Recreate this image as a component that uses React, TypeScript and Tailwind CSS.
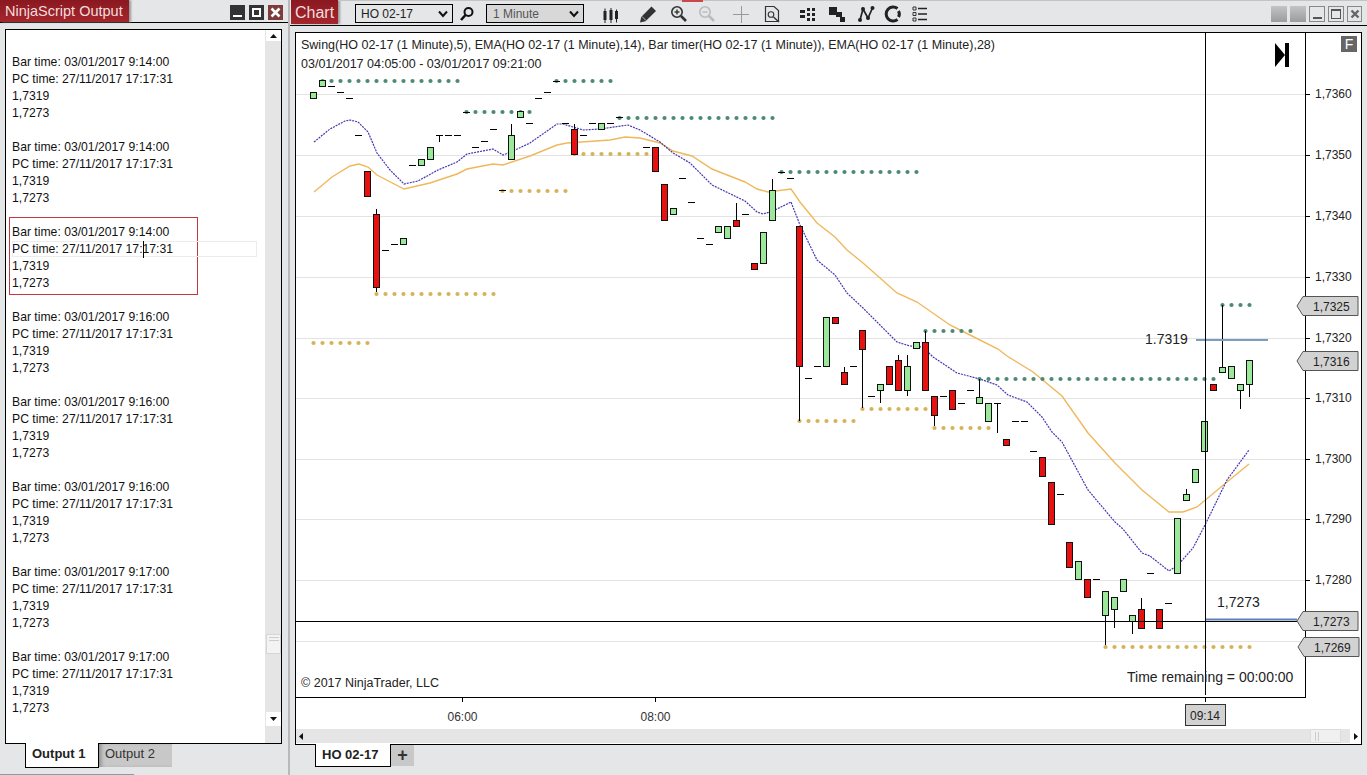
import type { ReactNode } from 'react';

const FONT = "font-['Liberation_Sans',Arial,sans-serif]";

// chart data in page pixels: [x, top, bottom, colour, wickTop, wickBottom]
type Candle = [number, number, number, 'r' | 'g', number?, number?];
const candles: Candle[] = [
  [313.5, 92, 98, 'g'], [322.5, 80, 86, 'g'], [367.5, 171, 196, 'r'], [376.5, 214, 287, 'r', 209, 292],
  [403.5, 238, 244, 'g'], [421.5, 159, 165, 'g'], [430.5, 147, 159, 'g'], [511.5, 135, 159, 'g', 124],
  [520.5, 111, 117, 'g'], [574.5, 129, 154, 'r', 124], [601.5, 123, 129, 'g'], [655.5, 147, 171, 'r'],
  [664.5, 184, 220, 'r'], [673.5, 208, 214, 'g'], [718.5, 226, 232, 'g'], [727.5, 226, 238, 'g'],
  [736.5, 220, 226, 'r', 203], [754.5, 263, 269, 'r'], [763.5, 232, 263, 'g'], [772.5, 190, 220, 'g', 179],
  [799.5, 226, 366, 'r', undefined, 421], [826.5, 317, 366, 'g'], [835.5, 317, 323, 'r'], [844.5, 372, 384, 'r', 367],
  [862.5, 330, 349, 'r', undefined, 408], [880.5, 384, 390, 'g', undefined, 403], [889.5, 366, 384, 'r'],
  [898.5, 360, 390, 'r', 355], [907.5, 366, 390, 'g', 355, 396], [916.5, 342, 348, 'g'], [925.5, 342, 390, 'r', 331],
  [934.5, 396, 415, 'r', undefined, 426], [952.5, 390, 409, 'r'], [979.5, 397, 403, 'g', 379], [988.5, 403, 421, 'g'],
  [1006.5, 439, 445, 'r'], [1042.5, 457, 476, 'r'], [1051.5, 482, 524, 'r'], [1069.5, 542, 567, 'r'],
  [1078.5, 561, 579, 'g'], [1087.5, 579, 597, 'r'], [1105.5, 591, 615, 'g', undefined, 645],
  [1114.5, 597, 609, 'g', undefined, 628], [1123.5, 579, 591, 'g'], [1132.5, 615, 621, 'g', undefined, 634],
  [1141.5, 609, 628, 'r', 598], [1159.5, 609, 628, 'r'], [1177.5, 518, 573, 'g'], [1186.5, 494, 500, 'g', 489],
  [1195.5, 469, 482, 'g'], [1204.5, 421, 451, 'g'], [1213.5, 384, 390, 'r'], [1222.5, 367, 372, 'g', 305],
  [1231.5, 366, 378, 'g'], [1240.5, 384, 390, 'g', undefined, 409], [1249.5, 360, 384, 'g', undefined, 397],
];

const dashes = [
  [331.5, 86], [340.5, 92], [349.5, 98], [358.5, 135], [385.5, 250], [394.5, 244], [412.5, 165], [439.5, 135],
  [448.5, 135], [457.5, 135], [466.5, 112], [475.5, 147], [484.5, 141], [493.5, 129], [502.5, 190], [529.5, 123],
  [538.5, 98], [547.5, 92], [556.5, 81], [565.5, 123], [583.5, 135], [592.5, 123], [610.5, 123], [619.5, 117],
  [646.5, 147], [682.5, 178], [691.5, 202], [700.5, 238], [709.5, 244], [745.5, 214], [781.5, 172], [790.5, 178],
  [808.5, 378], [817.5, 366], [853.5, 366], [871.5, 396], [943.5, 396], [961.5, 403], [970.5, 390], [1015.5, 421],
  [1024.5, 421], [1033.5, 451], [1060.5, 494], [1096.5, 579], [1150.5, 573], [1168.5, 603],
];

// [y, first x, last x], one dot every 9px
const greenDots = [[81, 322.5, 458.5], [81, 556.5, 610.5], [112, 466.5, 529.5], [118, 619.5, 772.5], [172, 781.5, 916.5], [331, 925.5, 970.5], [379, 979.5, 1213.5], [305, 1222.5, 1249.5]];
const goldDots = [[343, 313.5, 367.5], [294, 376.5, 493.5], [191, 502.5, 565.5], [154, 574.5, 646.5], [421, 799.5, 853.5], [409, 862.5, 925.5], [428, 934.5, 988.5], [647, 1105.5, 1249.5]];

const ema14 = '314,142 330,129 345,121 350,120 358,122 368,132 377,153 390,170 404,184 418,181 438,170 457,162 467,154 493,149 503,155 513,151 530,143 557,124 563,124 583,130 600,129 628,125 640,130 660,142 673,153 690,163 712,185 745,201 757,212 763,214 773,211 791,202 800,225 817,260 835,275 847,293 863,308 897,342 910,346 923,347 933,357 957,373 980,379 997,385 1008,395 1027,402 1042,417 1052,432 1062,442 1088,490 1115,522 1123,529 1142,553 1150,556 1169,571 1178,565 1193,548 1205,525 1227,480 1249,450';
const ema28 = '314,192 332,177 350,166 359,164 368,167 377,175 404,189 430,183 457,174 467,169 493,164 503,165 530,156 557,145 567,143 610,140 625,137 640,138 660,143 673,151 692,156 712,169 745,182 757,189 768,192 791,189 800,202 817,223 835,237 847,250 863,263 897,293 917,302 950,325 970,335 998,349 1007,356 1033,372 1062,396 1088,433 1115,463 1142,490 1169,512 1183,512 1197,507 1227,482 1249,464';

const grid = [
  [94, '1,7360'], [155, '1,7350'], [216, '1,7340'], [277, '1,7330'], [338, '1,7320'],
  [398, '1,7310'], [459, '1,7300'], [519, '1,7290'], [580, '1,7280'], [641, ''],
] as const;
const tags = [[306, '1,7325', 1297], [361, '1,7316', 1297], [621, '1,7273', 1297], [647, '1,7269', 1298]] as const;

const dotsFor = (row: number[]) => {
  const out: number[] = [];
  for (let x = row[1]; x <= row[2]; x += 9) out.push(x);
  return out;
};

const ChartDrawing = () => (
  <svg width="1065" height="696" viewBox="296 33 1065 696" className="block">
    {grid.map(([y]) => (
      <line key={y} x1="296" x2="1305" y1={y + 0.5} y2={y + 0.5} stroke="#e3e3e3" />
    ))}
    <polyline points={ema28} fill="none" stroke="#f0b85c" strokeWidth="1.4" />
    <polyline points={ema14} fill="none" stroke="#4338b0" strokeWidth="1.2" strokeDasharray="2 1" />
    {greenDots.map((row) => dotsFor(row).map((x) => <circle key={`${row[0]}-${x}`} cx={x} cy={row[0]} r="2.1" fill="#4d8a72" />))}
    {goldDots.map((row) => dotsFor(row).map((x) => <circle key={`${row[0]}-${x}`} cx={x} cy={row[0]} r="2.1" fill="#d6b25a" />))}
    {dashes.map(([x, y]) => (
      <line key={`${x}-${y}`} x1={x - 3.5} x2={x + 3.5} y1={y + 0.5} y2={y + 0.5} stroke="#000" />
    ))}
    {/* the small T candles */}
    <line x1="439.5" x2="439.5" y1="135" y2="142" stroke="#000" />
    <line x1="997.5" x2="997.5" y1="403" y2="433" stroke="#000" />
    <line x1="994" x2="1001" y1="403.5" y2="403.5" stroke="#000" />
    {candles.map(([x, top, bottom, c, wickTop, wickBottom]) => (
      <g key={x}>
        {wickTop !== undefined && <line x1={x} x2={x} y1={wickTop} y2={top} stroke="#000" />}
        {wickBottom !== undefined && <line x1={x} x2={x} y1={bottom} y2={wickBottom} stroke="#000" />}
        <rect x={x - 3} y={top + 0.5} width="6" height={bottom - top} fill={c === 'r' ? '#e61212' : '#9be89b'} stroke="#111" />
      </g>
    ))}
    {/* drawn lines and crosshair */}
    <line x1="1196" x2="1268" y1="340" y2="340" stroke="#7d9cc4" strokeWidth="2" />
    <line x1="1205" x2="1297" y1="619.5" y2="619.5" stroke="#5f82bd" strokeWidth="2" />
    <line x1="296" x2="1297" y1="621.5" y2="621.5" stroke="#000" />
    <line x1="1205.5" x2="1205.5" y1="33" y2="695" stroke="#000" />
    {/* frame and axes */}
    <line x1="1305.5" x2="1305.5" y1="33" y2="698" stroke="#000" />
    <line x1="296" x2="1305" y1="697.5" y2="697.5" stroke="#000" />
    {grid.map(([y, label]) => (
      <g key={label || y}>
        {label && <line x1="1305" x2="1310" y1={y + 0.5} y2={y + 0.5} stroke="#000" />}
        <text x="1315" y={y + 4} fontSize="12" fill="#222">{label}</text>
      </g>
    ))}
    {tags.map(([y, label, x]) => (
      <g key={label}>
        <polygon points={`${x},${y} ${x + 6},${y - 9.5} ${x + 61},${y - 9.5} ${x + 61},${y + 9.5} ${x + 6},${y + 9.5}`} fill="#d2d2d2" stroke="#555" />
        <text x={x + 16} y={y + 4.5} fontSize="12" fill="#222">{label}</text>
      </g>
    ))}
    {[462.5, 655.5, 1205.5].map((x) => (
      <line key={x} x1={x} x2={x} y1="697" y2="702" stroke="#000" />
    ))}
    <text x="447.5" y="721" fontSize="12" fill="#333">06:00</text>
    <text x="640.5" y="721" fontSize="12" fill="#333">08:00</text>
    <rect x="1185.5" y="704.5" width="40" height="21" fill="#d2d2d2" stroke="#333" />
    <text x="1190" y="720" fontSize="12" fill="#222">09:14</text>
    <text x="1145" y="344" fontSize="14" fill="#222">1.7319</text>
    <text x="1217" y="607" fontSize="14" fill="#222">1,7273</text>
    <text x="1127" y="682" fontSize="14" fill="#222">Time remaining = 00:00:00</text>
    <polygon points="1275,43 1285,55 1275,67" fill="#000" />
    <rect x="1285" y="43" width="4" height="24" fill="#000" />
  </svg>
);

const ToolIcon = ({ children, className = '' }: { children: ReactNode; className?: string }) => (
  <svg width="18" height="18" viewBox="0 0 18 18" className={`shrink-0 ${className}`}>{children}</svg>
);

const Zoom = ({ color, plus }: { color: string; plus?: boolean }) => (
  <ToolIcon>
    <circle cx="7" cy="7" r="5.2" fill="none" stroke={color} strokeWidth="1.6" />
    <line x1="11" y1="11" x2="16" y2="16" stroke={color} strokeWidth="2.6" />
    <line x1="4.5" y1="7" x2="9.5" y2="7" stroke={color} strokeWidth="1.4" />
    {plus && <line x1="7" y1="4.5" x2="7" y2="9.5" stroke={color} strokeWidth="1.4" />}
  </ToolIcon>
);

const Chevron = () => (
  <svg width="10" height="8" viewBox="0 0 10 8"><path d="M1 1.5 L5 6 L9 1.5" fill="none" stroke="#111" strokeWidth="2" /></svg>
);

const Toolbar = () => (
  <div className="flex items-center h-full pt-[2px]">
    <div className="ml-[17px] w-[98px] h-[19px] border border-black bg-[#e4e6e8] flex items-center pl-[5px] pr-[4px] text-[12px] text-[#222] justify-between">
      HO 02-17
      <Chevron />
    </div>
    <svg width="16" height="16" viewBox="0 0 16 16" className="ml-[6px]">
      <circle cx="9.5" cy="6" r="4" fill="none" stroke="#111" strokeWidth="2" />
      <line x1="6.5" y1="9" x2="2" y2="14" stroke="#111" strokeWidth="2.6" />
    </svg>
    <div className="ml-[11px] w-[98px] h-[19px] border border-black bg-[#d8d8d8] flex items-center pl-[6px] pr-[4px] text-[12px] text-[#555] justify-between">
      1 Minute
      <Chevron />
    </div>
    <div className="ml-[17px] flex items-center">
      <ToolIcon className="mr-[20px]">
        <path d="M4 3.5v15M10 3v15M15.5 4.5v13" stroke="#222" strokeWidth="1" />
        <rect x="2.5" y="6" width="3" height="9" fill="#222" /><rect x="8.5" y="5" width="3" height="10" fill="#222" /><rect x="14" y="6" width="3" height="8" fill="#222" />
      </ToolIcon>
      <ToolIcon className="mr-[13px]">
        <path d="M1 17.5 L2.2 12 L12.5 1.5 L17 6 L6.5 16.3 Z" fill="#333" />
        <line x1="3" y1="11.5" x2="7" y2="15.5" stroke="#ddd" strokeWidth="0.8" />
      </ToolIcon>
      <div className="mr-[10px]"><Zoom color="#333" plus /></div>
      <div className="mr-[16px]"><Zoom color="#bbb" /></div>
      <ToolIcon className="mr-[13px]">
        <path d="M1 9.5H17M9.5 1V18" stroke="#999" strokeWidth="1" fill="none" />
      </ToolIcon>
      <ToolIcon className="mr-[19px]">
        <path d="M2.5 1.5H11L15.5 5.5V16.5H2.5Z" fill="none" stroke="#333" strokeWidth="1.2" />
        <circle cx="8" cy="9.5" r="2.8" fill="none" stroke="#333" strokeWidth="1.1" />
        <line x1="10.5" y1="12" x2="16" y2="17" stroke="#333" strokeWidth="1.4" />
      </ToolIcon>
      <ToolIcon className="mr-[11px]">
        <path d="M0 5h5v3H0zM0 10h5v3H0zM7 3h3v3H7zM12 3h3v3h-3zM7 8h3v3H7zM12 8h3v3h-3zM7 13h3v3H7zM12 13h3v3h-3z" fill="#222" />
      </ToolIcon>
      <ToolIcon className="mr-[10px]">
        <path d="M0 2h8v8H0zM7 7h6v5H7zM11 12h5v5h-5z" fill="#222" />
      </ToolIcon>
      <ToolIcon className="mr-[9px]">
        <path d="M3 15 L6 4 L11 13 L15.5 3" fill="none" stroke="#222" strokeWidth="1.7" />
        <circle cx="3" cy="15" r="2" fill="#222" /><circle cx="6" cy="4" r="2" fill="#222" /><circle cx="11" cy="13" r="2" fill="#222" /><circle cx="15.5" cy="3" r="2" fill="#222" />
      </ToolIcon>
      <ToolIcon className="mr-[9px]">
        <path d="M13.5 3.5 A7 7 0 1 0 13.5 14.5" fill="none" stroke="#222" strokeWidth="3" />
        <path d="M14.5 6 A6 6 0 0 1 14.5 12" fill="none" stroke="#222" strokeWidth="3" />
      </ToolIcon>
      <ToolIcon>
        <path d="M2 2h3v3H2zM2 7.5h3v3H2zM2 13h3v3H2z" fill="none" stroke="#333" />
        <path d="M7 3.5h9M7 9h9M7 14.5h9" stroke="#222" strokeWidth="1.6" />
      </ToolIcon>
    </div>
  </div>
);

const WinBtn = ({ className, children }: { className: string; children?: ReactNode }) => (
  <div className={`flex items-center justify-center ${className}`}>{children}</div>
);

const outputBlocks = ['9:14:00', '9:14:00', '9:14:00', '9:16:00', '9:16:00', '9:16:00', '9:17:00', '9:17:00'];

const OutputPanel = () => (
  <aside className="w-[288px] shrink-0 flex flex-col">
    <div className="h-[23px] border-b border-black flex">
      <div className="w-[129px] h-[22px] pl-[5px] whitespace-nowrap bg-gradient-to-b from-[#8a1820] to-[#a5262d] text-[#f3dddd] text-[14.5px] leading-[22px] shadow-[2px_0_2px_#999]">NinjaScript Output</div>
      <div className="ml-[101px] mt-[5px] flex gap-[4px] h-[15px]">
        <WinBtn className="w-[15px] h-[15px] bg-[#333]"><div className="w-[9px] h-[2px] bg-white mt-[7px]" /></WinBtn>
        <WinBtn className="w-[15px] h-[15px] bg-[#333]"><div className="w-[9px] h-[9px] border-2 border-white" /></WinBtn>
        <WinBtn className="w-[15px] h-[15px] bg-[#7e3b3b]">
          <svg width="11" height="11" viewBox="0 0 11 11"><path d="M1.5 1.5L9.5 9.5M9.5 1.5L1.5 9.5" stroke="#fff" strokeWidth="2.6" /></svg>
        </WinBtn>
      </div>
    </div>
    <div className="ml-[5px] mt-[6px] w-[277px] h-[715px] border border-black bg-white flex relative">
      <div className="flex-1 pl-[6px] pt-[24px] text-[12.2px] leading-[17px] text-[#111]">
        {outputBlocks.map((time, i) => (
          <div key={i} className="h-[85px]">
            <div>Bar time: 03/01/2017 {time}</div>
            <div>PC time: 27/11/2017 17:17:31</div>
            <div>1,7319</div>
            <div>1,7273</div>
          </div>
        ))}
      </div>
      {/* selection marks over the text */}
      <div className="absolute left-[3px] top-[187px] w-[189px] h-[78px] border border-[#c0393f]" />
      <div className="absolute left-[6px] top-[211px] w-[245px] h-[16px] border border-[#ececec]" />
      <div className="absolute left-[137px] top-[211px] w-px h-[17px] bg-black" />
      <div className="w-[16px] bg-[#e5e5e5] flex flex-col items-end">
        <div className="w-[15px] h-[11px] bg-white flex items-center justify-center">
          <svg width="7" height="4" viewBox="0 0 7 4"><path d="M0 4L3.5 0L7 4Z" fill="#111" /></svg>
        </div>
        <div className="mt-[593px] w-[15px] h-[20px] bg-[#f3f3f3] border border-[#d6d6d6] flex flex-col gap-[2px] items-center pt-[2px]">
          <div className="w-[10px] h-px bg-[#ccc]" /><div className="w-[10px] h-px bg-[#ccc]" />
        </div>
        <div className="mt-[58px] w-[15px] h-[14px] bg-white flex items-center justify-center">
          <svg width="7" height="4" viewBox="0 0 7 4"><path d="M0 0L3.5 4L7 0Z" fill="#111" /></svg>
        </div>
      </div>
    </div>
    <div className="ml-[25px] flex -mt-px relative">
      <div className="w-[74px] h-[25px] bg-white border border-t-0 border-black text-[13px] font-bold text-[#222] pl-[6px] leading-[21px]">Output 1</div>
      <div className="w-[73px] h-[23px] mt-px bg-[#c8c8c8] text-[13px] text-[#333] pl-[6px] leading-[20px] shadow-[inset_4px_0_4px_-2px_#888]">Output 2</div>
    </div>
  </aside>
);

const ChartPanel = () => (
  <main className="flex-1 flex flex-col min-w-0">
    <div className="h-[26px] border-b border-black flex">
      <div className="ml-px w-[47px] h-[24px] pl-[4px] bg-gradient-to-b from-[#8a1820] to-[#a5262d] text-[#f3dddd] text-[16px] leading-[25px] shadow-[2px_0_2px_#999]">Chart</div>
      <Toolbar />
      <div className="ml-auto mr-[5px] mt-[6px] flex gap-[3px]">
        <div className="w-[16px] h-[16px] bg-gradient-to-b from-[#c4c4c4] to-[#9c9c9c]" />
        <div className="w-[16px] h-[16px] bg-gradient-to-b from-[#c4c4c4] to-[#9c9c9c]" />
        <WinBtn className="w-[16px] h-[16px] border border-[#888]"><div className="w-[9px] h-[2px] bg-[#555] mt-[7px]" /></WinBtn>
        <WinBtn className="w-[16px] h-[16px] border border-[#888]"><div className="w-[10px] h-[10px] border border-[#555] border-t-2" /></WinBtn>
        <WinBtn className="w-[15px] h-[16px] border border-[#888]">
          <svg width="10" height="10" viewBox="0 0 10 10"><path d="M1.5 1.5L8.5 8.5M8.5 1.5L1.5 8.5" stroke="#666" strokeWidth="2.4" /></svg>
        </WinBtn>
      </div>
    </div>
    <div className="ml-[5px] mt-[6px] w-[1067px] h-[713px] border border-black bg-white relative">
      <ChartDrawing />
      <div className="absolute left-[5px] top-[3px] text-[12.5px] leading-[19px] text-[#222] whitespace-nowrap">
        <div>Swing(HO 02-17 (1 Minute),5), EMA(HO 02-17 (1 Minute),14), Bar timer(HO 02-17 (1 Minute)), EMA(HO 02-17 (1 Minute),28)</div>
        <div>03/01/2017 04:05:00 - 03/01/2017 09:21:00</div>
      </div>
      <div className="absolute left-[5px] top-[642px] text-[12.5px] leading-[16px] text-[#222]">© 2017 NinjaTrader, LLC</div>
      <div className="absolute left-[1045px] top-[3px] w-[16px] h-[16px] bg-[#666] text-white text-[14px] leading-[16px] text-center">F</div>
      <div className="h-[14px] bg-[#e5e5e5] flex items-center justify-between">
        <div className="w-[9px] flex justify-center">
          <svg width="4" height="7" viewBox="0 0 4 7"><path d="M4 0L0 3.5L4 7Z" fill="#111" /></svg>
        </div>
        <div className="ml-auto w-[31px] h-[14px] bg-[#f0f0f0] border border-[#dcdcdc] flex gap-[2px] pl-[4px] items-center">
          <div className="w-px h-[9px] bg-[#ccc]" /><div className="w-px h-[9px] bg-[#ccc]" />
        </div>
        <div className="ml-[9px] w-[11px] h-[14px] bg-white flex items-center justify-center">
          <svg width="4" height="7" viewBox="0 0 4 7"><path d="M0 0L4 3.5L0 7Z" fill="#111" /></svg>
        </div>
      </div>
    </div>
    <div className="ml-[25px] flex -mt-px relative">
      <div className="w-[76px] h-[23px] bg-white border border-t-0 border-black text-[13px] font-bold text-[#222] pl-[6px] leading-[22px]">HO 02-17</div>
      <div className="w-[23px] h-[21px] mt-px bg-[#c8c8c8] text-[18px] font-bold text-[#333] text-center leading-[20px]">+</div>
    </div>
  </main>
);

export default function App() {
  return (
    <div className={`relative w-[1367px] h-[775px] overflow-hidden flex bg-[#e4e6e8] ${FONT}`}>
      <OutputPanel />
      <div className="w-[2px] shrink-0 bg-[#b9b9b9]" />
      <ChartPanel />
      {/* slivers of the windows behind */}
      <div className="absolute left-[338px] right-0 top-0 h-px bg-[#c4c4c4]" />
      <div className="absolute left-[682px] top-0 w-[21px] h-[2px] bg-[#c8484c]" />
      <div className="absolute left-0 bottom-0 w-[134px] h-px bg-[#7ea0a8]" />
    </div>
  );
}
